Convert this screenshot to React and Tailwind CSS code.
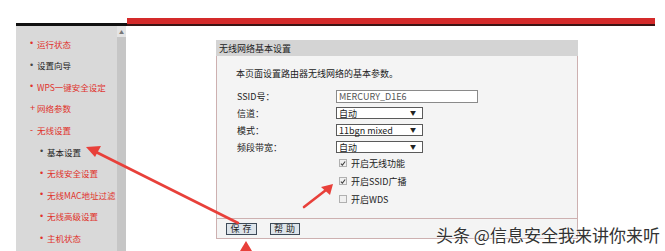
import React from 'react'

const menu = [
    { t: '运行状态', red: true, mark: '•', sub: false },
    { t: '设置向导', red: false, mark: '•', sub: false },
    { t: 'WPS一键安全设定', red: true, mark: '•', sub: false },
    { t: '网络参数', red: true, mark: '+', sub: false },
    { t: '无线设置', red: true, mark: '-', sub: false },
    { t: '基本设置', red: false, mark: '•', sub: true },
    { t: '无线安全设置', red: true, mark: '•', sub: true },
    { t: '无线MAC地址过滤', red: true, mark: '•', sub: true },
    { t: '无线高级设置', red: true, mark: '•', sub: true },
    { t: '主机状态', red: true, mark: '•', sub: true },
]

const Select = ({ value }) => (
    <div className="w-[87px] h-[12px] border border-[#5a5a5a] bg-white flex items-center justify-between pl-[2px] pr-[6px]">
        <span className="text-[9px] leading-none text-[#222]">{value}</span>
        <span className="text-[6px] leading-none text-[#222]">▼</span>
    </div>
)

const Check = ({ on, label }) => (
    <div className="h-[18px] flex items-center pl-[3px] gap-[4px]">
        <span className="w-[8px] h-[8px] border border-[#b0b0b0] bg-[#f0f0f0] flex items-center justify-center">
            {on && (
                <svg width="7" height="7" viewBox="0 0 7 7">
                    <path d="M1 3.6 L2.8 5.4 L6 1.2" stroke="#444" strokeWidth="1.3" fill="none" />
                </svg>
            )}
        </span>
        <span className="text-[9px] leading-none text-[#222]">{label}</span>
    </div>
)

const App = () => {
    return (
        <div
            className="relative w-[665px] h-[251px] overflow-hidden bg-white"
            style={{ fontFamily: '"Noto Sans CJK SC", "Liberation Sans", sans-serif' }}
        >
            <div className="flex pl-[16px] pt-[18px] h-full">
                {/* sidebar */}
                <div className="w-[111px] flex flex-col h-full">
                    <div className="h-[5px]" />
                    <div className="h-[3px] bg-[#111]" />
                    <div className="flex flex-1">
                        <div className="w-[101px] bg-[#d9d9d9] pt-[7px]">
                            {menu.map((m) => (
                                <div
                                    key={m.t}
                                    className={`h-[21.6px] flex items-center whitespace-nowrap text-[8.5px] leading-none ${m.sub ? 'pl-[24px]' : 'pl-[14px]'} ${m.red ? 'text-[#e0322b]' : 'text-[#222]'}`}
                                >
                                    <span
                                        className={`w-[7px] shrink-0 text-[9px] ${m.red ? 'text-[#e0322b]' : 'text-[#444]'}`}
                                        style={{ fontFamily: '"Liberation Sans", sans-serif' }}
                                    >
                                        {m.mark}
                                    </span>
                                    <span>{m.t}</span>
                                </div>
                            ))}
                        </div>
                        <div className="w-[9px] flex flex-col bg-[#e4e4e4]">
                            <div className="h-[11px] flex items-center justify-center text-[5px] text-[#777]">▲</div>
                            <div className="flex-1 bg-[#c6c6c6]" />
                        </div>
                    </div>
                </div>

                {/* main */}
                <div className="flex-1 flex flex-col">
                    <div className="w-[528px] h-[8px] bg-[#d42a2a] border-b-2 border-[#3a1414]" />
                    <div className="pl-[89px] pt-[14px]">
                        <div className="w-[362px]">
                            <div className="h-[16px] bg-[#d4d4d4] flex items-center pl-[3px] text-[9px] leading-none text-[#222]">
                                无线网络基本设置
                            </div>
                            <div className="h-[162px] bg-[#f4f4f4] border-x border-[#cdb0b0] pl-[19px] pt-[12px]">
                                <div className="h-[10px] flex items-center text-[9px] leading-none text-[#222]">
                                    本页面设置路由器无线网络的基本参数。
                                </div>
                                <div className="mt-[12px] ml-[1px]">
                                    <div className="h-[17px] flex items-start">
                                        <span className="w-[99px] h-[13px] flex items-center text-[9px] leading-none text-[#222]">SSID号：</span>
                                        <div className="w-[142px] h-[13px] border border-[#8a8a8a] bg-white flex items-center pl-[2px] text-[9px] leading-none text-[#555]">
                                            MERCURY_D1E6
                                        </div>
                                    </div>
                                    <div className="h-[17px] flex items-start">
                                        <span className="w-[99px] h-[12px] flex items-center text-[9px] leading-none text-[#222]">信道：</span>
                                        <Select value="自动" />
                                    </div>
                                    <div className="h-[17px] flex items-start">
                                        <span className="w-[99px] h-[12px] flex items-center text-[9px] leading-none text-[#222]">模式：</span>
                                        <Select value="11bgn mixed" />
                                    </div>
                                    <div className="h-[17px] flex items-start">
                                        <span className="w-[99px] h-[12px] flex items-center text-[9px] leading-none text-[#222]">频段带宽：</span>
                                        <Select value="自动" />
                                    </div>
                                    <div className="pl-[99px] -mt-[4px]">
                                        <Check on label="开启无线功能" />
                                        <Check on label="开启SSID广播" />
                                        <Check label="开启WDS" />
                                    </div>
                                </div>
                            </div>
                            <div className="h-[21px] bg-[#f4f4f4] border border-[#cdb0b0] flex items-center pl-[9px] gap-[13px]">
                                <button className="w-[31px] h-[12px] border border-[#3d4a58] bg-[#dde4ea] text-[9px] leading-none text-[#222] tracking-[3px] pl-[2px]">保存</button>
                                <button className="w-[30px] h-[12px] border border-[#3d4a58] bg-[#dde4ea] text-[9px] leading-none text-[#222] tracking-[3px] pl-[2px]">帮助</button>
                            </div>
                        </div>
                    </div>
                </div>
            </div>

            {/* red annotation arrows */}
            <svg className="absolute left-0 top-0 pointer-events-none" width="665" height="251" viewBox="0 0 665 251">
                <path d="M238 223 L96 152" stroke="#e8403a" strokeWidth="2.6" strokeLinecap="round" />
                <path d="M86 147 L101 146 L95 157 Z" fill="#e8403a" />
                <path d="M304 207 L326 190" stroke="#e8403a" strokeWidth="2.6" strokeLinecap="round" />
                <path d="M333 184 L330 195 L321 187 Z" fill="#e8403a" />
                <path d="M246 241 L240 251 L252 251 Z" fill="#e8403a" />
            </svg>

            {/* watermark */}
            <div
                className="absolute left-[436px] top-[225px] text-[17px] leading-[20px] text-[#333] whitespace-nowrap"
                style={{ textShadow: '0 0 2px #fff, 0 0 2px #fff' }}
            >
                头条 @信息安全我来讲你来听
            </div>
        </div>
    )
}

export default App
